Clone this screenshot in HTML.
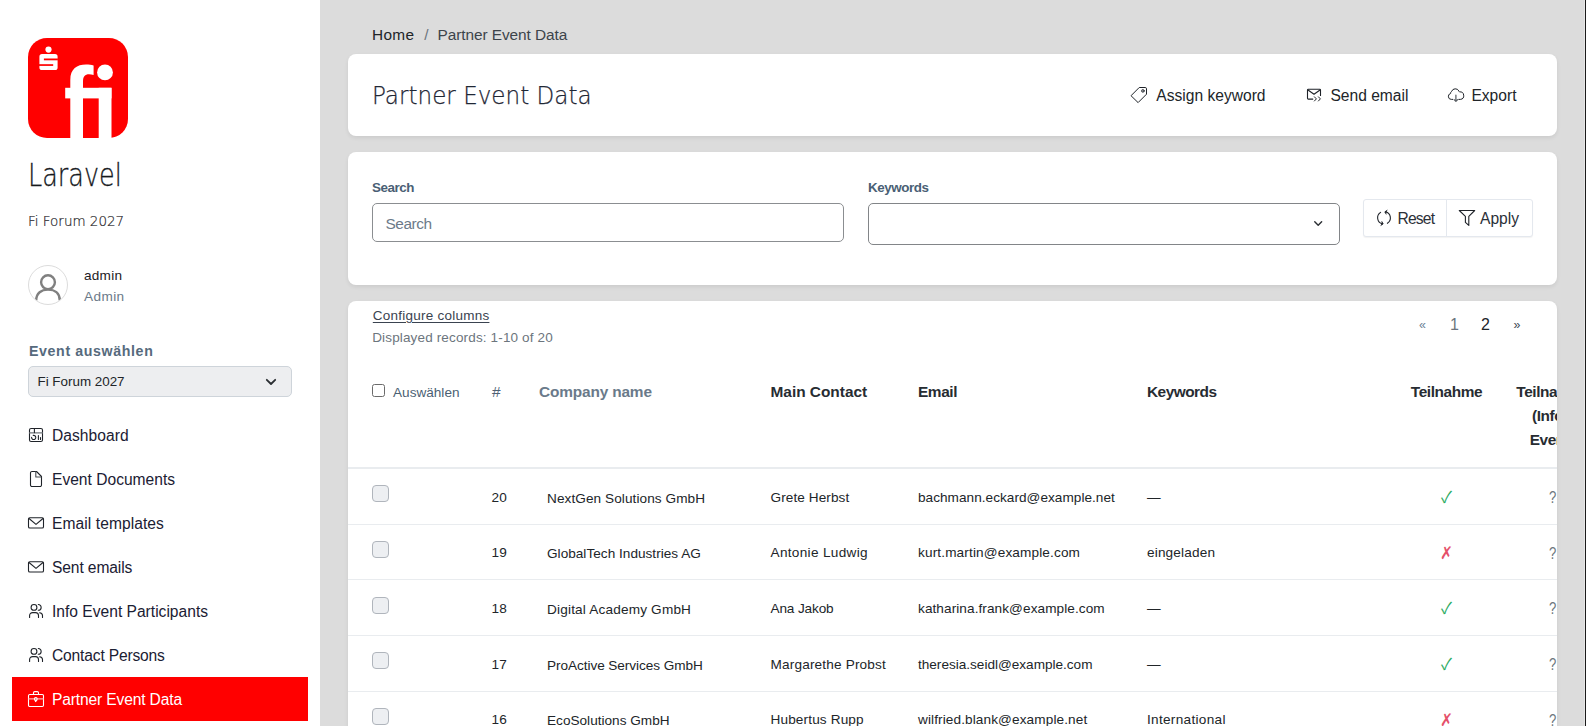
<!DOCTYPE html>
<html lang="en">
<head>
<meta charset="utf-8">
<title>Partner Event Data</title>
<style>
*{box-sizing:border-box;margin:0;padding:0}
html,body{width:1586px;height:726px;overflow:hidden}
body{background:#dcdcdc;font-family:"Liberation Sans",sans-serif;color:#212529;font-size:16px;position:relative}
.abs{position:absolute;white-space:nowrap;line-height:1}
svg{display:block;overflow:visible}
/* sidebar */
#sidebar{position:absolute;left:0;top:0;width:320px;height:726px;background:#fff}
#logo{position:absolute;left:28px;top:38px;width:100px;height:100px}
#brand{left:28.1px;top:159.8px;font-family:"DejaVu Sans Light","DejaVu Sans","Liberation Sans",sans-serif;font-weight:200;font-size:31.3px;color:#16191d;-webkit-text-stroke:.3px #16191d;transform:scaleX(.814);transform-origin:0 0}
#brandsub{left:28px;top:213.7px;font-family:"DejaVu Sans Light","DejaVu Sans","Liberation Sans",sans-serif;font-weight:200;font-size:14.4px;color:#1d2126;-webkit-text-stroke:.2px #1d2126;transform:scaleX(.937);transform-origin:0 0}
#avatar{position:absolute;left:28px;top:265px;width:40px;height:40px;border:1px solid #dcdcdc;border-radius:50%;overflow:hidden;background:#fff}
#uname{left:84px;top:268.6px;letter-spacing:.25px;font-size:13.6px;color:#1d2025}
#urole{left:84px;top:290px;letter-spacing:.4px;font-size:13.6px;color:#6c7a89}
#evlabel{left:29px;top:343.9px;letter-spacing:.62px;font-size:14.2px;font-weight:700;color:#566a7d}
#evselect{position:absolute;left:28px;top:366px;width:264px;height:31px;border:1px solid #ced4da;border-radius:5px;background:#edeef0}
#evselect span{left:8.5px;top:7.9px;font-size:13.4px;color:#212529}
#evselect svg{position:absolute;left:237px;top:11.5px}
.nav{position:absolute;left:12px;width:296px;height:44px;display:block;text-decoration:none}
.nav .ic{position:absolute}
.nav .tx{position:absolute;left:40px;top:15px;font-size:15.6px;line-height:1;white-space:nowrap;color:#1b2033}
.nav.active{background:#ff0000}
.nav.active .tx{color:#fff}
/* main */
.card{position:absolute;left:348px;width:1209px;background:#fff;border-radius:8px;box-shadow:0 2px 4px rgba(0,0,0,.075)}
#bc{left:372px;top:27.2px;font-size:15.4px;color:#212529}
#bc .sep{color:#6c757d;padding:0 8.8px 0 10.1px}
#bc .cur{color:#3d444b;letter-spacing:-.06px}
#title{left:372px;top:84.2px;font-family:"DejaVu Sans Light","DejaVu Sans","Liberation Sans",sans-serif;font-weight:200;font-size:24.7px;color:#1f2735;-webkit-text-stroke:.25px #1f2735;transform:scaleX(.934);transform-origin:0 0}
.pic{position:absolute}
button{border:0;background:none;padding:0;margin:0;font-family:inherit;cursor:pointer}
.hbtn{font-size:15.6px;color:#212529}
label.fl{font-size:13.4px;font-weight:700;color:#4a5f75;letter-spacing:-.45px}
#search{position:absolute;left:24px;top:51px;width:472px;height:39px;border:1px solid #8b8e91;border-radius:5px;background:#fff}
#search span{left:12.4px;top:12px;font-size:15.4px;color:#6c7a89;letter-spacing:-.4px}
#kw{position:absolute;left:520px;top:51px;width:472px;height:42px;border:1px solid #828588;border-radius:5px;background:#fff}
#btng{position:absolute;left:1015px;top:47px;width:170px;height:38px;border:1px solid #e4e8ee;border-radius:3px;box-shadow:0 1px 1px rgba(0,0,0,.05);background:#fff}
#btng .div{position:absolute;left:82px;top:0;width:1px;height:36px;background:#e4e8ee}
#btng .abs{font-size:15.6px;color:#2b3038}
/* table */
#tcard{overflow:hidden;height:440px;border-radius:8px 8px 0 0}
#cfg{left:24.8px;top:7.8px;letter-spacing:.24px;font-size:13.5px;color:#3a4350;text-decoration:underline;text-underline-offset:1.5px}
#disp{left:24.2px;top:29.8px;letter-spacing:.15px;font-size:13.5px;color:#6c757d}
.pg{font-size:15px;color:#6c757d}
.th{font-size:15.4px;font-weight:700;color:#272c32}
.row{position:absolute;left:0;width:1209px;height:55.67px}
.row .abs.co{top:22.68px}
.rl{position:absolute;left:0;width:1209px;height:1px;background:#e9ecef}
.row .abs{font-size:13.6px;color:#212529;top:21.68px;letter-spacing:.08px}
.row .cb{position:absolute;left:24px;top:16.3px;width:17px;height:17px;border:1px solid #b0b5bc;border-radius:4px;background:#edeff2}
.row .ok{color:#2bab63}

#hcb{position:absolute;left:24px;top:83px;width:13px;height:13px;border:1px solid #6b6b6b;border-radius:2.5px;background:#fff}
#hsel{left:45px;top:84.6px;font-size:13.6px;color:#4b5f73}
.th{top:82.6px}
.th.c1{color:#6a7a8a}
.th.ctr{transform:translateX(-50%);text-align:center;letter-spacing:-.4px}
.th.ml{line-height:24px;top:78.6px}
#hline{position:absolute;left:0;top:166px;width:1209px;height:2px;background:#e9ecef}
.row .mk{left:1098.5px;transform:translateX(-50%);font-size:16px;top:20.5px;letter-spacing:0}
.row .ok{font-family:"Liberation Sans","Noto Sans CJK SC",sans-serif}
.row .no{font-family:"Liberation Sans","DejaVu Sans",sans-serif;font-size:15.5px;top:20.5px;transform:translateX(-50%) scaleY(1.13);color:#e5506a}
.row .q{left:1201px;font-size:16px;top:21.05px;color:#6c757d;letter-spacing:0;transform:scaleX(.82);transform-origin:0 0}
#edge{position:absolute;left:1584px;top:0;width:2px;height:726px;background:#1b1b1b;border-left:1px solid #e7e7e7}
</style>
</head>
<body>
<aside id="sidebar">
  <svg id="logo" viewBox="0 0 100 100">
    <rect width="100" height="100" rx="19" ry="19" fill="#ff0000"/>
    <g fill="#fff">
      <circle cx="77" cy="34.4" r="7.9"/>
      <rect x="70.7" y="49.8" width="12.8" height="50.2"/>
      <rect x="37.2" y="49.8" width="46.3" height="10.6"/>
      <path d="M42.3 100 V42 C42.3 31 49 26.6 58 26.6 C61 26.6 63.6 27 65.6 27.6 V37 C64 36.4 62.4 36.2 61 36.2 C57 36.2 55 38.4 55 43 V100 Z"/>
      <circle cx="20.5" cy="11.6" r="3.1"/>
      <rect x="11.4" y="16.1" width="18.2" height="15.9" rx="2.6"/>
      <rect x="15.9" y="20.5" width="14" height="1.8" fill="#ff0000"/>
      <rect x="11" y="26.2" width="14.2" height="1.7" fill="#ff0000"/>
    </g>
  </svg>
  <h2 id="brand" class="abs">Laravel</h2>
  <div id="brandsub" class="abs">Fi Forum 2027</div>
  <div id="avatar">
    <svg width="38" height="38" viewBox="0 0 38 38" fill="none" stroke="#808080" stroke-width="2.4">
      <circle cx="19" cy="16.2" r="6.9"/>
      <path d="M7.2 34.5 C7.2 27 12.4 23.6 19 23.6 C25.6 23.6 30.8 27 30.8 34.5"/>
    </svg>
  </div>
  <div id="uname" class="abs">admin</div>
  <div id="urole" class="abs">Admin</div>
  <div id="evlabel" class="abs">Event auswählen</div>
  <div id="evselect"><span class="abs">Fi Forum 2027</span>
    <svg width="10" height="6" viewBox="0 0 10 6" fill="none" stroke="#2b2f33" stroke-width="1.8" stroke-linecap="round" stroke-linejoin="round"><path d="M0.8 0.8 L5 5 L9.2 0.8"/></svg>
  </div>

  <nav>
  <a class="nav" style="top:413px"><svg class="ic" style="left:17px;top:15px" width="14" height="14" viewBox="0 0 14 14" fill="none" stroke="#1f2329" stroke-width="1.1" stroke-linecap="round" stroke-linejoin="round"><rect x="0.5" y="0.5" width="13" height="13" rx="1.6"/><path d="M0.5 4.9H13.5" stroke="#70757a"/><path d="M5.4 0.5V4.6"/><path d="M2.6 9.2A2.1 2.1 0 1 0 4.2 7.4"/><path d="M9.4 7.6V11.4M11.5 9.6V11.4"/></svg><span class="tx" style="letter-spacing:.04px">Dashboard</span></a>
  <a class="nav" style="top:457px"><svg class="ic" style="left:18px;top:14px" width="12" height="16" viewBox="0 0 12 16" fill="none" stroke="#1f2329" stroke-width="1.1" stroke-linecap="round" stroke-linejoin="round"><path d="M6.5 0.5H2A1.5 1.5 0 0 0 0.5 2V14A1.5 1.5 0 0 0 2 15.5H10A1.5 1.5 0 0 0 11.5 14V5.5Z"/><path d="M5.8 0.8V6H11.2" stroke="#474c51"/></svg><span class="tx">Event Documents</span></a>
  <a class="nav" style="top:501px"><svg class="ic" style="left:16px;top:16px" width="16" height="12" viewBox="0 0 16 12" fill="none" stroke="#1f2329" stroke-width="1.1" stroke-linecap="round" stroke-linejoin="round"><rect x="0.5" y="0.8" width="15" height="10.2" rx="1.3"/><path d="M1 1.5L8 7.4L15 1.5"/></svg><span class="tx" style="letter-spacing:.07px">Email templates</span></a>
  <a class="nav" style="top:545px"><svg class="ic" style="left:16px;top:16px" width="16" height="12" viewBox="0 0 16 12" fill="none" stroke="#1f2329" stroke-width="1.1" stroke-linecap="round" stroke-linejoin="round"><rect x="0.5" y="0.8" width="15" height="10.2" rx="1.3"/><path d="M1 1.5L8 7.4L15 1.5"/></svg><span class="tx" style="letter-spacing:-.11px">Sent emails</span></a>
  <a class="nav" style="top:589px"><svg class="ic" style="left:17px;top:15px" width="14" height="14" viewBox="0 0 14 14" fill="none" stroke="#1f2329" stroke-width="1.1" stroke-linecap="round" stroke-linejoin="round"><circle cx="5" cy="3.4" r="2.9"/><path d="M9.3 0.55A2.85 2.85 0 0 1 9.3 6.25"/><path d="M0.6 13.5V11.6A3 3 0 0 1 3.6 8.6H6.5A3 3 0 0 1 9.5 11.6V13.5"/><path d="M10.6 8.7A3 3 0 0 1 13.5 11.6V13.5"/></svg><span class="tx">Info Event Participants</span></a>
  <a class="nav" style="top:633px"><svg class="ic" style="left:17px;top:15px" width="14" height="14" viewBox="0 0 14 14" fill="none" stroke="#1f2329" stroke-width="1.1" stroke-linecap="round" stroke-linejoin="round"><circle cx="5" cy="3.4" r="2.9"/><path d="M9.3 0.55A2.85 2.85 0 0 1 9.3 6.25"/><path d="M0.6 13.5V11.6A3 3 0 0 1 3.6 8.6H6.5A3 3 0 0 1 9.5 11.6V13.5"/><path d="M10.6 8.7A3 3 0 0 1 13.5 11.6V13.5"/></svg><span class="tx" style="letter-spacing:-.17px">Contact Persons</span></a>
  <a class="nav active" style="top:677px"><svg class="ic" style="left:16px;top:14px" width="16" height="16" viewBox="0 0 16 16" fill="none" stroke="#fff" stroke-width="1.1" stroke-linecap="round" stroke-linejoin="round"><rect x="0.5" y="3.5" width="15" height="12" rx="1.2"/><path d="M5.5 3.4V1.8A1.2 1.2 0 0 1 6.7 0.6H9.3A1.2 1.2 0 0 1 10.5 1.8V3.4"/><path d="M0.8 7.9H15.2" stroke="#ffb0b0"/><circle cx="7.8" cy="7.9" r="1.4"/><path d="M7.2 9.4L7.6 10.6L8.6 9.2" /></svg><span class="tx" style="letter-spacing:-.15px">Partner Event Data</span></a>
</nav>
</aside>

<nav id="bc" class="abs" aria-label="breadcrumb"><a style="letter-spacing:.3px;color:inherit;text-decoration:none">Home</a><span class="sep">/</span><span class="cur">Partner Event Data</span></nav>

<div class="card" id="hcard" style="top:54px;height:82px"></div>
<svg class="pic" style="left:1130px;top:86px" width="18" height="18" viewBox="1130 86 18 18" fill="none" stroke="#1f2329" stroke-width="1" stroke-linecap="round" stroke-linejoin="round"><path d="M1139.6 87.5H1145.2A1.3 1.3 0 0 1 1146.5 88.8V94.2L1138.1 102.6L1131.3 96Z"/><circle cx="1142.9" cy="90.9" r="1.35" fill="#a9adb1" stroke-width="0.8"/></svg>
<svg class="pic" style="left:1306px;top:88px" width="16" height="15" viewBox="1306 88 16 15" fill="none" stroke="#1f2329" stroke-width="1.1" stroke-linecap="round" stroke-linejoin="round"><path d="M1312.8 99.1H1308.3A.8 .8 0 0 1 1307.5 98.3V90A.8 .8 0 0 1 1308.3 89.2H1319.7A.8 .8 0 0 1 1320.5 90V95.4"/><path d="M1308 90L1314 94.3L1320 90"/><path d="M1314.4 96.8L1316.4 98.9L1314.4 101M1318.4 96.8L1320.4 98.9L1318.4 101" stroke-width="1"/></svg>
<svg class="pic" style="left:1447px;top:87px" width="18" height="16" viewBox="1447 87 18 16" fill="none" stroke="#1f2329" stroke-width="1" stroke-linecap="round" stroke-linejoin="round"><path d="M1452.6 99.4H1451.4A3 3 0 0 1 1450.6 93.5A2.2 2.2 0 0 1 1451.6 91.4A4 4 0 0 1 1458.9 91A1.5 1.5 0 0 0 1459.5 91.9A3.75 3.75 0 0 1 1460.4 99.4H1458.8"/><path d="M1455.9 95.2V101.2M1454.1 99.6L1455.9 101.4L1457.7 99.6" stroke="#5e6368" stroke-width="1.3"/></svg>
<h1 id="title" class="abs">Partner Event Data</h1>
<button type="button" class="abs hbtn" style="left:1156.3px;top:88.3px">Assign keyword</button>
<button type="button" class="abs hbtn" style="left:1330.4px;top:88.3px">Send email</button>
<button type="button" class="abs hbtn" style="left:1471.4px;top:88.3px">Export</button>

<div class="card" id="fcard" style="top:152px;height:133px">
  <label class="abs fl" style="left:24px;top:28.6px">Search</label>
  <div id="search"><span class="abs">Search</span></div>
  <label class="abs fl" style="left:520px;top:28.6px">Keywords</label>
  <div id="kw"><svg style="position:absolute;left:444.8px;top:16.8px" width="8.4" height="5.6" viewBox="0 0 9 6" fill="none" stroke="#2b2f33" stroke-width="1.5" stroke-linecap="round" stroke-linejoin="round"><path d="M0.8 0.8 L4.5 4.6 L8.2 0.8"/></svg></div>
  <div id="btng"><div class="div"></div>
<svg class="pic" style="left:12px;top:10px" width="16" height="17" viewBox="1376 210 16 17" fill="none" stroke="#1f2329" stroke-width="1.1" stroke-linecap="round" stroke-linejoin="round"><path d="M1380.6 212.4A6.4 6.4 0 0 0 1382.4 224"/><path d="M1380.9 225.4L1383.2 223.8L1381.9 221.6" fill="#1f2329" stroke-width="0.8"/><path d="M1387.4 223.3A6.4 6.4 0 0 0 1385.6 211.7"/><path d="M1387.1 210.3L1384.8 211.9L1386.1 214.1" fill="#1f2329" stroke-width="0.8"/></svg>
<svg class="pic" style="left:94px;top:9px" width="18" height="18" viewBox="1458 209 18 18" fill="none" stroke="#1f2329" stroke-width="1.1" stroke-linecap="round" stroke-linejoin="round"><path d="M1459.3 210.5H1474.7L1468.8 216.3V225.4L1465.4 222.4V216.3Z"/></svg>
    <span class="abs" style="left:33.4px;top:10.5px;letter-spacing:-.75px">Reset</span>
    <span class="abs" style="left:116px;top:10.5px">Apply</span>
  </div>
</div>

<div class="card" id="tcard" style="top:301px">
  <a id="cfg" class="abs">Configure columns</a>
  <div id="disp" class="abs">Displayed records: 1-10 of 20</div>
  <div class="abs pg" style="left:1071px;top:17.6px;font-size:12.4px;color:#6c8093">«</div>
  <div class="abs pg" style="left:1102px;top:16.1px;font-size:16px">1</div>
  <div class="abs pg" style="left:1133px;top:16.1px;font-size:16px;color:#212529">2</div>
  <div class="abs pg" style="left:1165.4px;top:17.6px;font-size:12.4px;color:#3b4754">»</div>
  <div id="hcb"></div>
  <div class="abs" id="hsel">Auswählen</div>
  <div class="abs th c1" style="left:144px;font-weight:400;color:#4f6174">#</div>
  <div class="abs th c1" style="left:191px;letter-spacing:-.15px">Company name</div>
  <div class="abs th" style="left:422.5px">Main Contact</div>
  <div class="abs th" style="left:570px;letter-spacing:-.4px">Email</div>
  <div class="abs th" style="left:799px;letter-spacing:-.5px">Keywords</div>
  <div class="abs th ctr" style="left:1098.5px">Teilnahme</div>
  <div class="abs th ctr ml" style="left:1204px">Teilnahme<br><span style="position:relative;left:-4.4px">(Info</span><br>Event)</div>
  <div id="hline"></div>
  <div class="rl" style="top:223px"></div><div class="rl" style="top:278px"></div><div class="rl" style="top:334px"></div><div class="rl" style="top:390px"></div>
  <div class="row" role="row" style="top:168.00px"><i class="cb"></i><span class="abs" style="left:143.6px">20</span><span class="abs co" style="left:199px">NextGen Solutions GmbH</span><span class="abs" style="left:422.5px">Grete Herbst</span><span class="abs" style="left:570px;letter-spacing:0.035px">bachmann.eckard@example.net</span><span class="abs" style="left:799px">—</span><span class="abs mk ok">✓</span><span class="abs q">?</span></div>
  <div class="row" role="row" style="top:223.67px"><i class="cb"></i><span class="abs" style="left:143.6px">19</span><span class="abs co" style="left:199px;letter-spacing:0.020px">GlobalTech Industries AG</span><span class="abs" style="left:422.5px;letter-spacing:0.320px">Antonie Ludwig</span><span class="abs" style="left:570px;letter-spacing:0.140px">kurt.martin@example.com</span><span class="abs" style="left:799px;letter-spacing:0.160px">eingeladen</span><span class="abs mk no">✗</span><span class="abs q">?</span></div>
  <div class="row" role="row" style="top:279.33px"><i class="cb"></i><span class="abs" style="left:143.6px">18</span><span class="abs co" style="left:199px;letter-spacing:0.180px">Digital Academy GmbH</span><span class="abs" style="left:422.5px;letter-spacing:-0.140px">Ana Jakob</span><span class="abs" style="left:570px">katharina.frank@example.com</span><span class="abs" style="left:799px">—</span><span class="abs mk ok">✓</span><span class="abs q">?</span></div>
  <div class="row" role="row" style="top:335.00px"><i class="cb"></i><span class="abs" style="left:143.6px">17</span><span class="abs co" style="left:199px;letter-spacing:-0.060px">ProActive Services GmbH</span><span class="abs" style="left:422.5px;letter-spacing:0.170px">Margarethe Probst</span><span class="abs" style="left:570px;letter-spacing:-0.010px">theresia.seidl@example.com</span><span class="abs" style="left:799px">—</span><span class="abs mk ok">✓</span><span class="abs q">?</span></div>
  <div class="row" role="row" style="top:390.67px"><i class="cb"></i><span class="abs" style="left:143.6px">16</span><span class="abs co" style="left:199px;letter-spacing:0.010px">EcoSolutions GmbH</span><span class="abs" style="left:422.5px;letter-spacing:0.140px">Hubertus Rupp</span><span class="abs" style="left:570px;letter-spacing:0.110px">wilfried.blank@example.net</span><span class="abs" style="left:799px;letter-spacing:0.300px">International</span><span class="abs mk no">✗</span><span class="abs q">?</span></div>
</div>
<div id="edge"></div>
</body>
</html>
